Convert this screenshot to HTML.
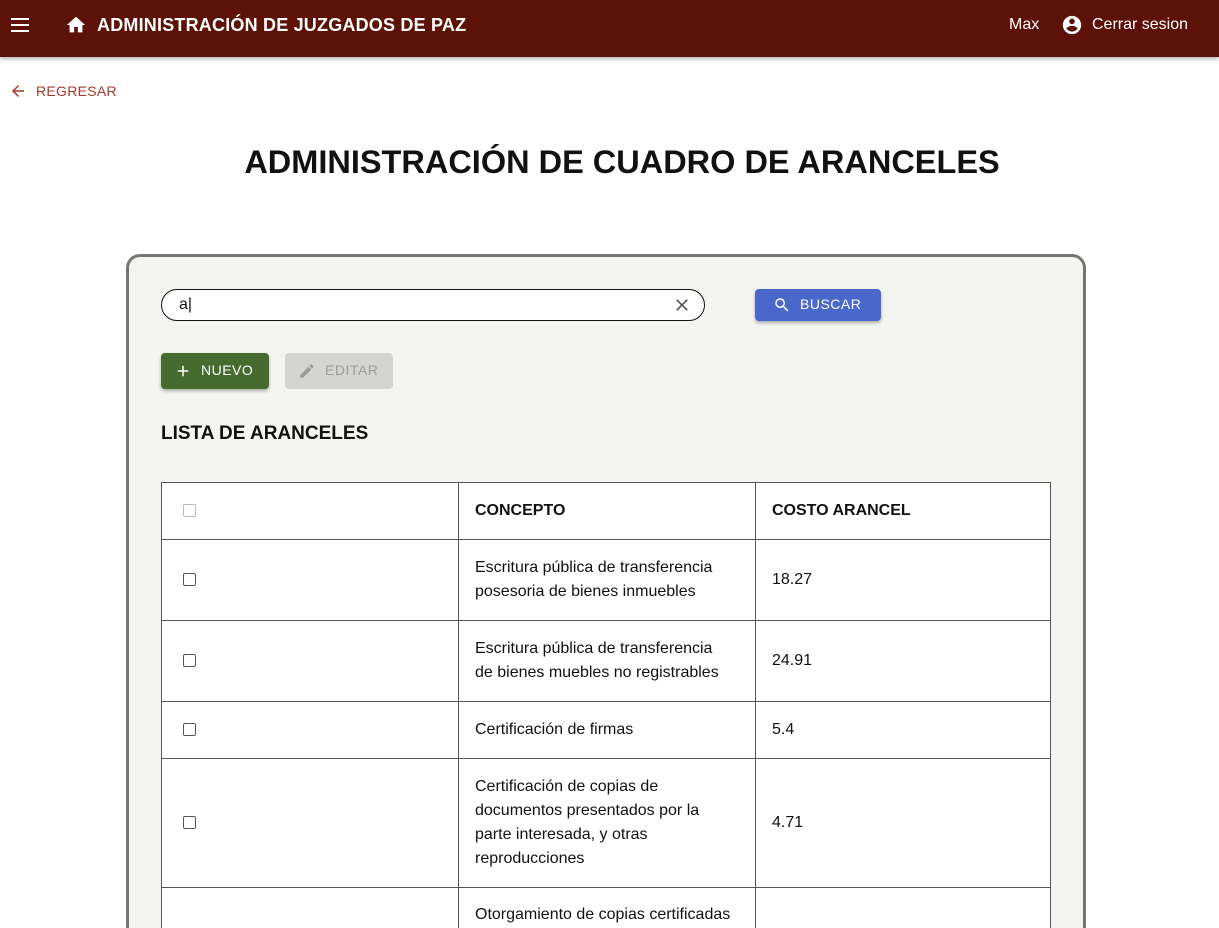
<!DOCTYPE html>
<html><head><meta charset="utf-8"><style>
*{box-sizing:border-box}
html,body{margin:0;width:1219px;height:928px;overflow:hidden}
body{position:relative;background:#fff;font-family:"Liberation Sans",sans-serif;color:#111}
.hdr{position:absolute;left:0;top:0;width:1219px;height:57px;background:#5c1206;color:#fff;box-shadow:0 2px 4px rgba(0,0,0,.3);z-index:2}
.hdr .t{position:absolute;left:97px;top:15px;font-size:18px;font-weight:bold;letter-spacing:.2px}
.hdr .max{position:absolute;left:1009px;top:16px;font-size:16px}
.hdr .cs{position:absolute;left:1092px;top:16px;font-size:16px}
.back{position:absolute;left:36px;top:83px;font-size:14px;color:#a63a2c;letter-spacing:.3px}
h1{position:absolute;left:0;width:1244px;text-align:center;top:144px;margin:0;font-size:32.5px;font-weight:bold;white-space:nowrap}
.card{position:absolute;left:126px;top:254px;width:960px;height:800px;border:3px solid #757575;border-radius:14px;background:#f4f4f0}
.search{position:absolute;left:161px;top:289px;width:544px;height:32px;border:1.5px solid #111;border-radius:16px;background:#fff}
.search span{position:absolute;left:17px;top:6px;font-size:16px}
.btn{position:absolute;height:36px;border-radius:4px;font-size:14px;letter-spacing:.5px;color:#fff}
table{position:absolute;left:161px;top:482px;width:890px;border-collapse:collapse;background:#fff;font-size:16px;table-layout:fixed}
td{border:1px solid #555;padding:0 24px 0 16px;vertical-align:middle;line-height:24px}
.cb{display:inline-block;width:13px;height:13px;border:1.5px solid #555;border-radius:2px;margin-left:5px;vertical-align:middle}
</style></head><body>
<div class="hdr">
<svg style="position:absolute;left:10px;top:16px" width="20" height="18" viewBox="0 0 20 18"><path d="M1 3h18M1 9h18M1 15h18" stroke="#fff" stroke-width="2"/></svg>
<svg style="position:absolute;left:65px;top:14px" width="22" height="22" viewBox="0 0 24 24"><path fill="#fff" d="M10 20v-6h4v6h5v-8h3L12 3 2 12h3v8z"/></svg>
<div class="t">ADMINISTRACIÓN DE JUZGADOS DE PAZ</div>
<div class="max">Max</div>
<svg style="position:absolute;left:1061px;top:14px" width="22" height="22" viewBox="0 0 24 24"><path fill="#fff" d="M12 2C6.48 2 2 6.480 2 12s4.48 10 10 10 10-4.48 10-10S17.52 2 12 2zm0 3c1.66 0 3 1.34 3 3s-1.34 3-3 3-3-1.34-3-3 1.34-3 3-3zm0 14.2c-2.5 0-4.71-1.28-6-3.220.03-1.99 4-3.08 6-3.08 1.99 0 5.97 1.09 6 3.08-1.29 1.94-3.5 3.22-6 3.22z"/></svg>
<div class="cs">Cerrar sesion</div>
</div>
<svg style="position:absolute;left:9px;top:82px" width="18" height="18" viewBox="0 0 24 24"><path fill="#a63a2c" d="M20 11H7.83l5.59-5.59L12 4l-8 8 8 8 1.41-1.41L7.83 13H20v-2z"/></svg>
<div class="back">REGRESAR</div>
<h1>ADMINISTRACIÓN DE CUADRO DE ARANCELES</h1>
<div class="card"></div>
<div class="search"><span>a|</span>
<svg style="position:absolute;left:510px;top:5px" width="20" height="20" viewBox="0 0 24 24"><path fill="#555" d="M19 6.41 17.59 5 12 10.59 6.41 5 5 6.41 10.59 12 5 17.59 6.41 19 12 13.41 17.59 19 19 17.590 13.41 12z"/></svg></div>
<div class="btn" style="left:755px;top:289px;width:126px;height:32px;background:#4a68cc;box-shadow:0 2px 3px rgba(0,0,0,.3)">
<svg style="position:absolute;left:18px;top:7px" width="18" height="18" viewBox="0 0 24 24"><path fill="#fff" d="M15.5 14h-.79l-.28-.27A6.47 6.47 0 0 0 16 9.5 6.5 6.5 0 1 0 9.5 16c1.61 0 3.09-.59 4.23-1.57l.27.28v.79l5 4.99L20.49 19l-4.99-5zm-6 0C7.01 14 5 11.990 5 9.5S7.01 5 9.5 5 14 7.01 14 9.5 11.99 14 9.5 14z"/></svg>
<span style="position:absolute;left:45px;top:7px">BUSCAR</span></div>
<div class="btn" style="left:161px;top:353px;width:108px;background:#456b2e;box-shadow:0 2px 3px rgba(0,0,0,.3)">
<svg style="position:absolute;left:13px;top:9px" width="18" height="18" viewBox="0 0 24 24"><path fill="#fff" d="M19 13h-6v6h-2v-6H5v-2h6V5h2v6h6v2z"/></svg>
<span style="position:absolute;left:40px;top:9px">NUEVO</span></div>
<div class="btn" style="left:285px;top:353px;width:108px;background:#d5d5d0;color:#9c9c9c">
<svg style="position:absolute;left:13px;top:9px" width="18" height="18" viewBox="0 0 24 24"><path fill="#9c9c9c" d="M3 17.25V21h3.75L17.81 9.94l-3.75-3.75L3 17.25zM20.71 7.04a1 1 0 0 0 0-1.41l-2.34-2.34a1 1 0 0 0-1.41 0l-1.83 1.83 3.75 3.75 1.83-1.83z"/></svg>
<span style="position:absolute;left:40px;top:9px">EDITAR</span></div>
<div style="position:absolute;left:161px;top:423px;font-size:19px;font-weight:bold">LISTA DE ARANCELES</div>
<table>
<tr style="height:57px"><td style="width:297px"><span class="cb" style="border-color:#bbb"></span></td><td style="width:297px;font-weight:bold">CONCEPTO</td><td style="font-weight:bold">COSTO ARANCEL</td></tr>
<tr style="height:81px"><td><span class="cb"></span></td><td>Escritura pública de transferencia posesoria de bienes inmuebles</td><td>18.27</td></tr>
<tr style="height:81px"><td><span class="cb"></span></td><td>Escritura pública de transferencia de bienes muebles no registrables</td><td>24.91</td></tr>
<tr style="height:57px"><td><span class="cb"></span></td><td>Certificación de firmas</td><td>5.4</td></tr>
<tr style="height:129px"><td><span class="cb"></span></td><td>Certificación de copias de documentos presentados por la parte interesada, y otras reproducciones</td><td>4.71</td></tr>
<tr style="height:81px"><td></td><td style="vertical-align:top;padding-top:15px">Otorgamiento de copias certificadas</td><td></td></tr>
</table>
</body></html>
